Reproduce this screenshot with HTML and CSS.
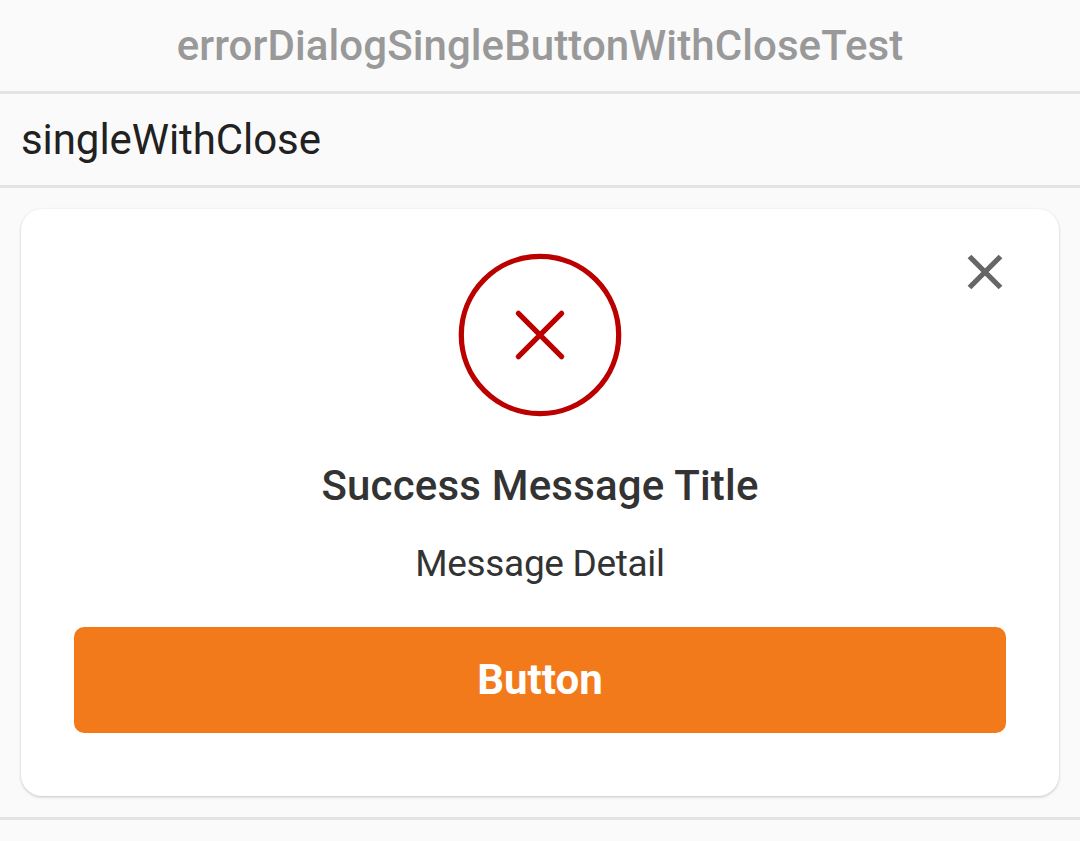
FILE: index.html
```html
<!DOCTYPE html>
<html lang="en">
<head>
<meta charset="utf-8">
<title>Error dialog</title>
<link rel="stylesheet" href="styles.css">
</head>
<body>
<header class="title">errorDialogSingleButtonWithCloseTest</header>
<div class="label">singleWithClose</div>
<main class="stage">
  <section class="card">
    <button class="close" aria-label="Close"><svg width="36" height="36" viewBox="0 0 36 36"><path d="M2.5 2.5 33.5 33.5M33.5 2.5 2.5 33.5"/></svg></button>
    <svg class="status" width="164" height="164" viewBox="0 0 164 164"><circle cx="82" cy="82" r="78.7"/><path d="M60.4 60.4 103.6 103.6M103.6 60.4 60.4 103.6"/></svg>
    <h1 class="heading">Success Message Title</h1>
    <p class="detail">Message Detail</p>
    <button class="action">Button</button>
  </section>
</main>
</body>
</html>
```
FILE: styles.css
```css
* { box-sizing: border-box; }
body { margin: 0; min-height: 841px; background: #fafafa; font-family: Roboto, sans-serif; }
.title { height: 94px; border-bottom: 3px solid #e4e4e4; text-align: center; font-size: 42px; line-height: 91px; font-weight: 500; letter-spacing: .09px; color: #999; }
.label { height: 94px; border-bottom: 3px solid #e4e4e4; padding-left: 21px; font-size: 42px; line-height: 91px; letter-spacing: -.07px; color: #212121; }
.stage { height: 632px; border-bottom: 3px solid #e4e4e4; padding: 21px; }
.card { position: relative; height: 587px; padding: 44px 53px 0; border-radius: 21px; background: #fff; box-shadow: 0 1px 3px rgba(0,0,0,.22); display: flex; flex-direction: column; align-items: center; }
.close { position: absolute; top: 45px; right: 56px; width: 36px; height: 36px; padding: 0; border: 0; background: none; }
.close svg { display: block; fill: none; stroke: #666; stroke-width: 5.3; }
.status { flex: none; fill: none; stroke: #b00; stroke-width: 5.25; stroke-linecap: round; }
.heading { margin: 44px 0 0; font-size: 42px; line-height: 49px; font-weight: 500; letter-spacing: .19px; color: #333; }
.detail { margin: 32px 0 0; font-size: 37px; line-height: 44px; letter-spacing: -.33px; color: #333; }
.action { margin: 41px 0 0; width: 932px; height: 106px; border: 0; border-radius: 10px; padding: 0; background: #f37a1b; color: #fff; font: 700 42px/106px Roboto, sans-serif; }
```
